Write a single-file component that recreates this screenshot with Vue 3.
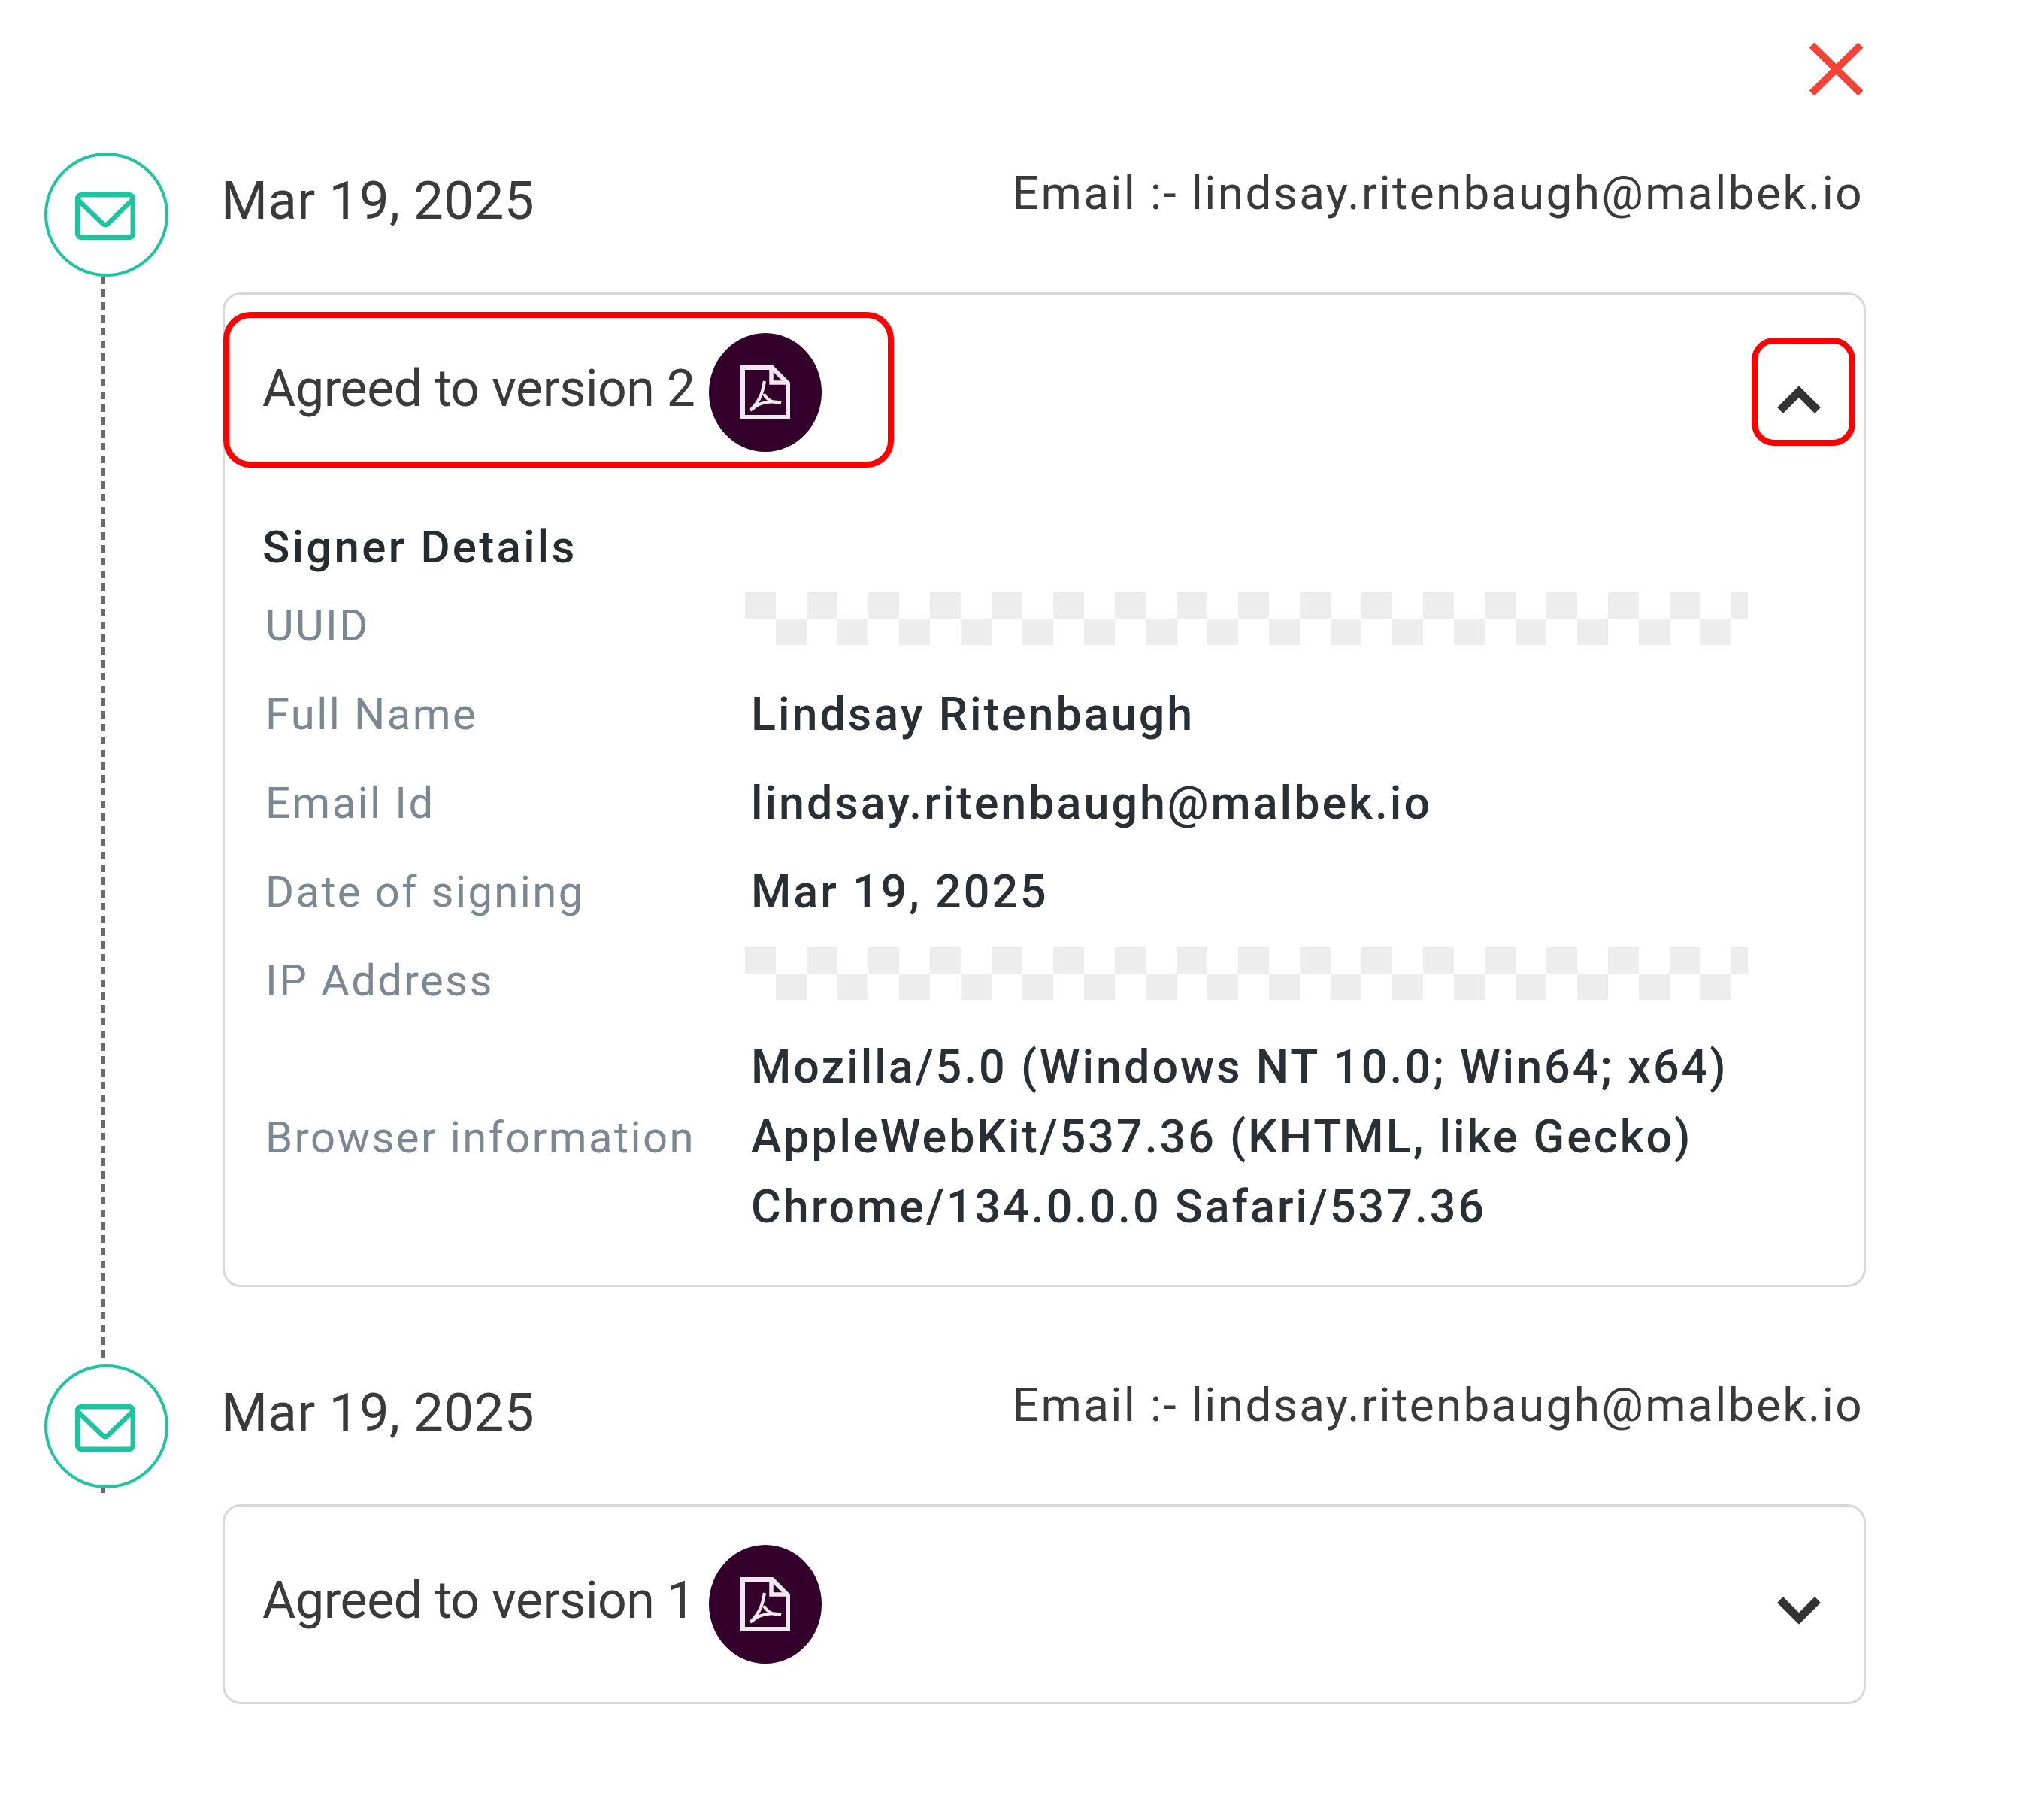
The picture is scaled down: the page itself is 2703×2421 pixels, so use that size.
<template>
  <div class="timeline">
    <div class="close-row">
      <svg class="close-icon" width="73" height="72" viewBox="0 0 73 72">
        <path d="M4 4 L69 68 M69 4 L4 68" fill="none" stroke="#f44336" stroke-width="9.5" />
      </svg>
    </div>

    <div v-for="entry in entries" :key="entry.version" class="entry" :class="{ 'entry-open': entry.open }">
      <div class="rail">
        <div class="rail-circle">
          <svg width="80" height="63" viewBox="0 0 80 63" fill="none" stroke="#1cc4a0" stroke-width="6.5">
            <rect x="3.2" y="3.2" width="73.6" height="56.6" rx="5" />
            <path d="M4 10 L36 41 Q40 45 44 41 L76 10" stroke-linejoin="round" />
          </svg>
        </div>
        <div class="rail-line"></div>
      </div>

      <div class="content">
        <div class="head">
          <span class="date">Mar 19, 2025</span>
          <span class="email">Email :- lindsay.ritenbaugh@malbek.io</span>
        </div>

        <div class="card">
          <div class="card-head">
            <span class="agreed">Agreed to version {{ entry.version }}</span>
            <span class="pdf-btn">
              <svg width="66" height="72" viewBox="0 0 66 72" fill="none" stroke="#f1e9ef">
                <path d="M3 3 H42 L63 24 V69 H3 Z" stroke-width="6" />
                <path d="M41 3 V23 H63" stroke-width="5.5" />
                <path d="M32 21 C30 32 28 46 13 60 M31 38 C36 47 43 50 54 50 M16 58 C24 50 40 46 54 50" stroke-width="4.2" />
              </svg>
            </span>
            <svg class="chevron" width="58" height="38" viewBox="0 0 58 38" fill="none" stroke="#333" stroke-width="11">
              <path :d="entry.open ? 'M4 34 L29 9 L54 34' : 'M4 4 L29 29 L54 4'" />
            </svg>
          </div>

          <div v-if="entry.open" class="details">
            <div class="details-title">Signer Details</div>
            <div class="details-grid">
              <template v-for="row in rows" :key="row.label">
                <div class="label">{{ row.label }}</div>
                <div v-if="row.hidden" class="redacted"></div>
                <div v-else class="value">{{ row.value }}</div>
              </template>
            </div>
          </div>

          <template v-if="entry.open">
            <div class="mark mark-title"></div>
            <div class="mark mark-toggle"></div>
          </template>
        </div>
      </div>
    </div>
  </div>
</template>

<script setup>
const entries = [
  { version: 2, open: true },
  { version: 1, open: false }
]

const rows = [
  { label: 'UUID', hidden: true },
  { label: 'Full Name', value: 'Lindsay Ritenbaugh' },
  { label: 'Email Id', value: 'lindsay.ritenbaugh@malbek.io' },
  { label: 'Date of signing', value: 'Mar 19, 2025' },
  { label: 'IP Address', hidden: true },
  {
    label: 'Browser information',
    value: 'Mozilla/5.0 (Windows NT 10.0; Win64; x64) AppleWebKit/537.36 (KHTML, like Gecko) Chrome/134.0.0.0 Safari/537.36'
  }
]
</script>

<style scoped>
.timeline {
  width: 2703px;
  box-sizing: border-box;
  padding: 56px 221px 100px 59px;
  font-family: Roboto, sans-serif;
  color: #3a3a3a;
}
.close-row {
  display: flex;
  justify-content: flex-end;
  padding-right: 3px;
  height: 147px;
}

.entry {
  display: flex;
  gap: 72px;
}
.entry-open {
  padding-bottom: 103px;
}
.rail {
  width: 165px;
  flex: none;
  display: flex;
  flex-direction: column;
}
.rail-circle {
  width: 165px;
  height: 165px;
  flex: none;
  box-sizing: border-box;
  border: 4px solid #1cc4a0;
  border-radius: 50%;
  display: flex;
  align-items: center;
  justify-content: center;
  padding: 4px 3px 0 0;
}
.rail-line {
  width: 6px;
  height: 6px;
  margin-left: 75px;
  background: repeating-linear-gradient(#6a6a6a 0 10px, transparent 10px 17px);
}
.entry-open .rail-line {
  height: auto;
  flex: 1;
  margin-bottom: -96px;
}

.content {
  flex: 1;
  min-width: 0;
}
.head {
  height: 186px;
  display: flex;
  justify-content: space-between;
  align-items: flex-start;
}
.date {
  font-size: 71px;
  line-height: 84px;
  letter-spacing: 0.3px;
  margin: 22px 0 0 -2px;
}
.email {
  font-size: 62px;
  line-height: 70px;
  letter-spacing: 2.4px;
  margin-top: 19px;
  margin-right: 3px;
}

.card {
  position: relative;
  border: 3px solid #d8d8d8;
  border-radius: 24px;
}
.card-head {
  display: flex;
  align-items: center;
  padding: 51px 57px 51px 50px;
}
.agreed {
  font-size: 68px;
  line-height: 80px;
  letter-spacing: -0.45px;
  margin: -10px 18px 0 0;
}
.pdf-btn {
  width: 150px;
  height: 158px;
  border-radius: 50%;
  background: #33002b;
  display: flex;
  align-items: center;
  justify-content: center;
}
.chevron {
  margin-left: auto;
  margin-top: 18px;
}

.details {
  padding: 41px 50px 47px 50px;
}
.details-title {
  font-size: 60px;
  line-height: 70px;
  font-weight: 500;
  letter-spacing: 3.3px;
  color: #262b30;
  margin-bottom: 10px;
}
.details-grid {
  display: grid;
  grid-template-columns: 650px 1fr;
  align-items: center;
  grid-auto-rows: minmax(118px, auto);
}
.label {
  font-size: 58px;
  letter-spacing: 2.4px;
  color: #7b8792;
  padding-left: 4px;
}
.value {
  font-size: 61px;
  line-height: 93px;
  font-weight: 500;
  letter-spacing: 3px;
  color: #2a2f35;
  padding: 10px 0;
}
.redacted {
  height: 70px;
  width: 1334px;
  margin: 0 0 18px -8px;
  background: conic-gradient(#fff 25%, #ededed 0 50%, #fff 0 75%, #ededed 0);
  background-size: 82px 70px;
}

.mark {
  position: absolute;
  box-sizing: border-box;
  border: 8px solid #ff0000;
}
.mark-title {
  left: -2px;
  top: 23px;
  width: 892px;
  height: 207px;
  border-radius: 36px;
}
.mark-toggle {
  left: 2031px;
  top: 57px;
  width: 138px;
  height: 144px;
  border-radius: 30px;
}
</style>

<style>
html, body {
  margin: 0;
  background: #fff;
}
</style>
